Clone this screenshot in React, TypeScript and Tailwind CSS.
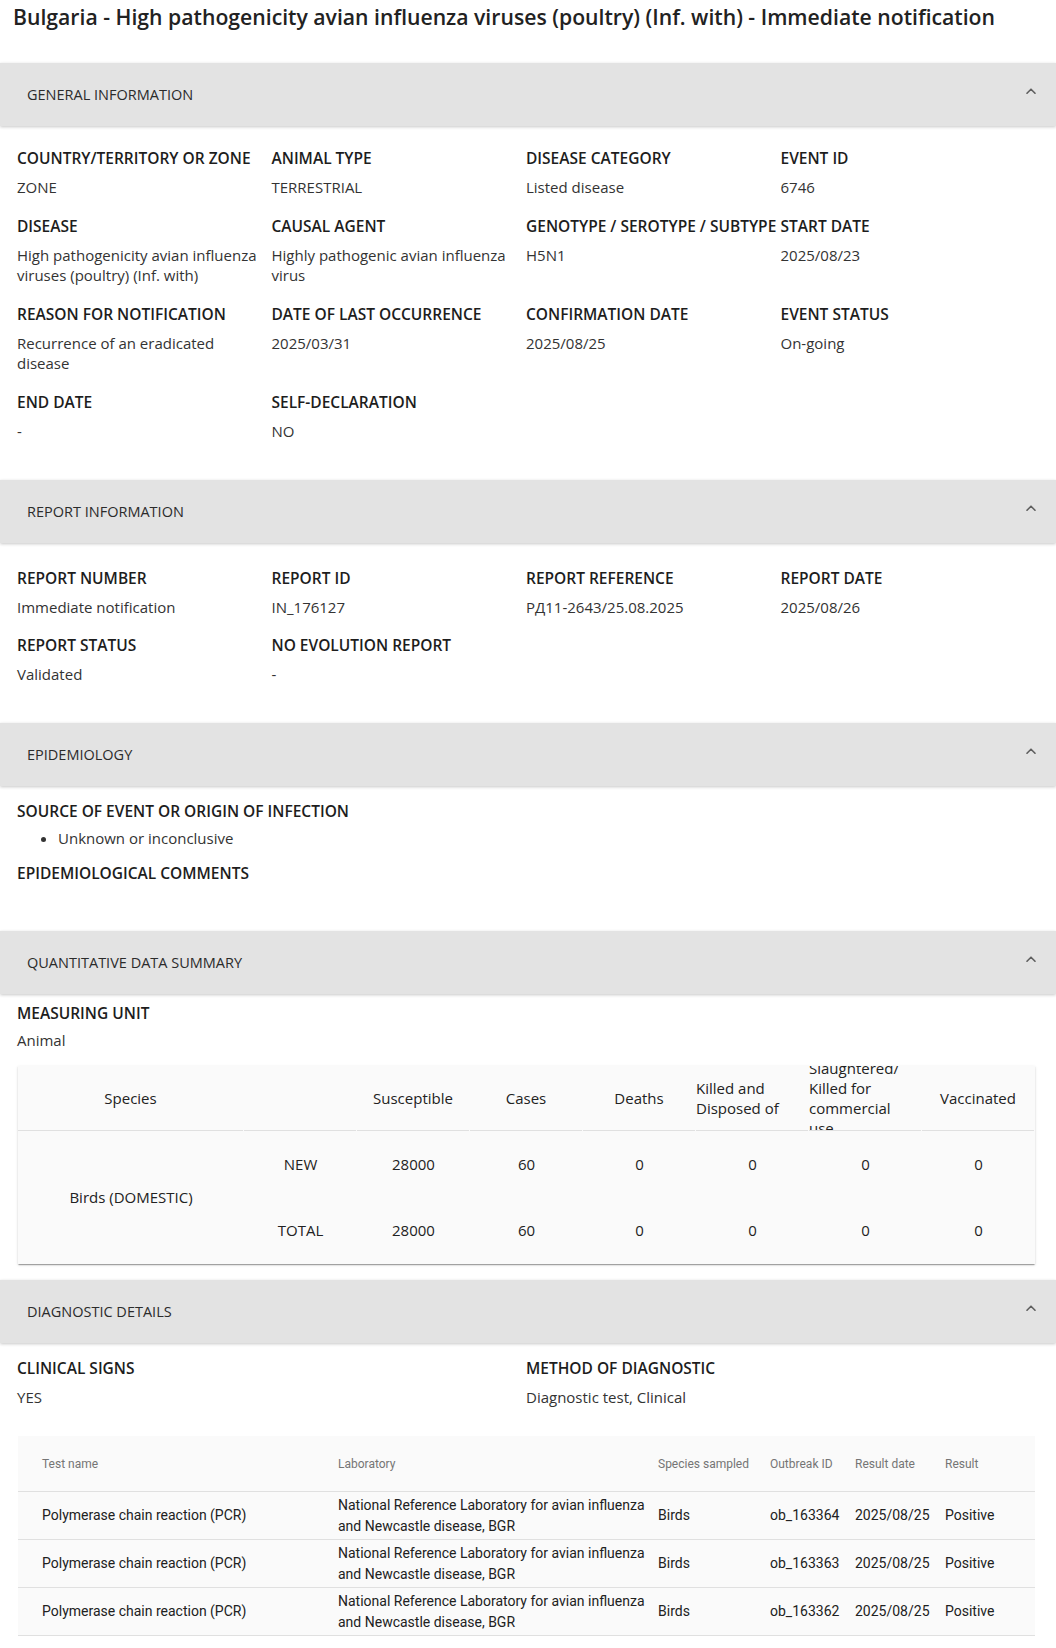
import React from "react";

const Chevron = () => (
  <svg width="10" height="6" viewBox="0 0 10 6" fill="none" className="mb-[7px] shrink-0">
    <polyline points="1,5.2 5,1.2 9,5.2" stroke="#5f5f5f" strokeWidth="1.6" strokeLinecap="round" strokeLinejoin="round" />
  </svg>
);

function SectionHeader({ title }: { title: string }) {
  return (
    <div className="relative z-10 flex h-[63px] items-center justify-between bg-[#e3e3e3] pl-[27px] pr-[20px] shadow-[0_1px_3px_rgba(0,0,0,0.22)]">
      <span className="text-[14.5px] leading-[20px] text-[#2b2b2b]">{title}</span>
      <Chevron />
    </div>
  );
}

function Label({ children }: { children: React.ReactNode }) {
  return (
    <div className="whitespace-nowrap text-[15.5px] font-semibold leading-[24px] text-[#1d1d1d]">{children}</div>
  );
}

function Field({ label, value, className = "" }: { label: string; value?: React.ReactNode; className?: string }) {
  return (
    <div className={className}>
      <Label>{label}</Label>
      {value !== undefined && (
        <div className="mt-[7px] pr-[8px] text-[15px] leading-[20px] text-[#333]">{value}</div>
      )}
    </div>
  );
}

const general: [string, string][] = [
  ["COUNTRY/TERRITORY OR ZONE", "ZONE"],
  ["ANIMAL TYPE", "TERRESTRIAL"],
  ["DISEASE CATEGORY", "Listed disease"],
  ["EVENT ID", "6746"],
  ["DISEASE", "High pathogenicity avian influenza viruses (poultry) (Inf. with)"],
  ["CAUSAL AGENT", "Highly pathogenic avian influenza virus"],
  ["GENOTYPE / SEROTYPE / SUBTYPE", "H5N1"],
  ["START DATE", "2025/08/23"],
  ["REASON FOR NOTIFICATION", "Recurrence of an eradicated disease"],
  ["DATE OF LAST OCCURRENCE", "2025/03/31"],
  ["CONFIRMATION DATE", "2025/08/25"],
  ["EVENT STATUS", "On-going"],
  ["END DATE", "-"],
  ["SELF-DECLARATION", "NO"],
];

const report: [string, string][] = [
  ["REPORT NUMBER", "Immediate notification"],
  ["REPORT ID", "IN_176127"],
  ["REPORT REFERENCE", "РД11-2643/25.08.2025"],
  ["REPORT DATE", "2025/08/26"],
  ["REPORT STATUS", "Validated"],
  ["NO EVOLUTION REPORT", "-"],
];

const qHeaders: { label: React.ReactNode; wide?: boolean }[] = [
  { label: "Species" },
  { label: "" },
  { label: "Susceptible" },
  { label: "Cases" },
  { label: "Deaths" },
  { label: (<>Killed and<br />Disposed of</>), wide: true },
  { label: (<>Slaughtered/<br />Killed for<br />commercial<br />use</>), wide: true },
  { label: "Vaccinated" },
];

const qRows = [
  ["NEW", "28000", "60", "0", "0", "0", "0"],
  ["TOTAL", "28000", "60", "0", "0", "0", "0"],
];

const tests = [
  "ob_163364",
  "ob_163363",
  "ob_163362",
];

export default function App() {
  return (
    <div className="w-[1056px] bg-white font-['Open_Sans',sans-serif]">
      <div className="h-[63px] pl-[13px] pt-[3px] text-[21.2px] font-semibold leading-[28px] text-[#222]">
        Bulgaria - High pathogenicity avian influenza viruses (poultry) (Inf. with) - Immediate notification
      </div>

      <SectionHeader title="GENERAL INFORMATION" />
      <div className="grid grid-cols-4 gap-y-[17px] pb-[39px] pl-[17px] pr-[21px] pt-[20px]">
        {general.map(([l, v]) => (
          <Field key={l} label={l} value={v} />
        ))}
      </div>

      <SectionHeader title="REPORT INFORMATION" />
      <div className="grid grid-cols-4 gap-y-[16px] pb-[39px] pl-[17px] pr-[21px] pt-[23px]">
        {report.map(([l, v]) => (
          <Field key={l} label={l} value={v} />
        ))}
      </div>

      <SectionHeader title="EPIDEMIOLOGY" />
      <div className="pb-[46px] pl-[17px] pr-[21px] pt-[13px]">
        <Label>SOURCE OF EVENT OR ORIGIN OF INFECTION</Label>
        <ul className="mt-[5px] list-disc pl-[41px] text-[15px] leading-[20px] text-[#333]">
          <li>Unknown or inconclusive</li>
        </ul>
        <div className="mt-[13px]">
          <Label>EPIDEMIOLOGICAL COMMENTS</Label>
        </div>
      </div>

      <SectionHeader title="QUANTITATIVE DATA SUMMARY" />
      <div className="pb-[16px] pl-[17px] pr-[21px] pt-[7px]">
        <Label>MEASURING UNIT</Label>
        <div className="mt-[5px] text-[15px] leading-[20px] text-[#333]">Animal</div>
        <div className="ml-px mt-[16px] w-[1017px] bg-[#fafafa] text-[15px] text-[#222] shadow-[0_2px_1px_-1px_rgba(0,0,0,0.2),0_1px_1px_0_rgba(0,0,0,0.14),0_1px_3px_0_rgba(0,0,0,0.12)]">
          <div className="grid h-[65px] grid-cols-[2fr_repeat(7,1fr)]">
            {qHeaders.map((h, i) => (
              <div key={i} className="mr-px flex h-[65px] items-center justify-center overflow-hidden border-b border-[#e0e0e0]">
                <div className={`${h.wide ? "w-full" : ""} text-left leading-[20px]`}>{h.label}</div>
              </div>
            ))}
          </div>
          <div className="grid grid-cols-[2fr_repeat(7,1fr)] grid-rows-[66px_67px]">
            <div className="row-span-2 flex items-center justify-center">Birds (DOMESTIC)</div>
            {qRows.map((r) =>
              r.map((c, j) => (
                <div key={r[0] + j} className="flex items-center justify-center">
                  {c}
                </div>
              ))
            )}
          </div>
        </div>
      </div>

      <SectionHeader title="DIAGNOSTIC DETAILS" />
      <div className="pb-[13px] pl-[17px] pr-[21px] pt-[13px]">
        <div className="grid grid-cols-2">
          <Field label="CLINICAL SIGNS" value="YES" />
          <Field label="METHOD OF DIAGNOSTIC" value="Diagnostic test, Clinical" />
        </div>
        <div className="ml-px mt-[29px] w-[1017px] bg-[#fafafa] font-['Roboto',sans-serif]">
          <div className="grid h-[56px] grid-cols-[320px_320px_112px_85px_90px_90px] items-center border-b border-[#e0e0e0] text-[12px] text-[#757575]">
            <div className="pl-[24px]">Test name</div>
            <div>Laboratory</div>
            <div>Species sampled</div>
            <div>Outbreak ID</div>
            <div>Result date</div>
            <div>Result</div>
          </div>
          {tests.map((id) => (
            <div key={id} className="grid h-[48px] grid-cols-[320px_320px_112px_85px_90px_90px] items-center border-b border-[#e0e0e0] text-[14px] leading-[21px] text-[#212121]">
              <div className="pl-[24px]">Polymerase chain reaction (PCR)</div>
              <div className="pr-[4px]">National Reference Laboratory for avian influenza and Newcastle disease, BGR</div>
              <div>Birds</div>
              <div>{id}</div>
              <div>2025/08/25</div>
              <div>Positive</div>
            </div>
          ))}
        </div>
      </div>
    </div>
  );
}
